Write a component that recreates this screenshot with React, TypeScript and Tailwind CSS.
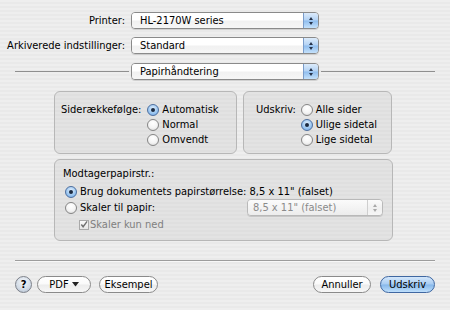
import React from "react";

const FONT = "font-['DejaVu_Sans_Condensed','DejaVu_Sans',sans-serif]";

function Arrows({ disabled = false }: { disabled?: boolean }) {
  const c = disabled ? "#a8a8a8" : "#25324a";
  return (
    <svg width="6" height="10" viewBox="0 0 6 10">
      <path d="M3 1 L5 4 L1 4 Z" fill={c} />
      <path d="M3 9 L5 6 L1 6 Z" fill={c} />
    </svg>
  );
}

function Popup({ text, width, disabled = false }: { text: string; width: string; disabled?: boolean }) {
  return (
    <div
      className={`flex h-[17px] ${width} rounded-[4px] border ${
        disabled ? "border-[#b9b9b9]" : "border-[#8a8a8a]"
      } overflow-hidden shadow-[0_1px_0_rgba(0,0,0,0.12)]`}
    >
      <div
        className={`flex-1 flex items-center leading-none ${
          disabled
            ? "pl-[5px] text-[#8a8a8a] bg-[linear-gradient(180deg,#fbfbfb_0%,#f3f3f3_55%,#ececec_100%)]"
            : "pl-[8px] text-black bg-[linear-gradient(180deg,#ffffff_0%,#ffffff_45%,#f1f1f1_55%,#f6f6f6_100%)]"
        }`}
      >
        {text}
      </div>
      <div
        className={`w-[15px] flex items-center justify-center border-l ${
          disabled
            ? "border-[#cfcfcf] bg-[linear-gradient(180deg,#fbfbfb_0%,#f0f0f0_55%,#f6f6f6_100%)]"
            : "border-[#7a9cca] bg-[linear-gradient(180deg,#dcebfb_0%,#b3d2f4_48%,#8fbdee_52%,#c4e1fb_100%)]"
        }`}
      >
        <Arrows disabled={disabled} />
      </div>
    </div>
  );
}

function Radio({ on = false }: { on?: boolean }) {
  return (
    <span
      className={`shrink-0 w-[12px] h-[12px] rounded-full border flex items-center justify-center ${
        on
          ? "border-[#4d6f9f] bg-[radial-gradient(circle_at_50%_35%,#e3f0fd_0%,#9ec8f1_55%,#6ea6e6_100%)]"
          : "border-[#858585] bg-[radial-gradient(circle_at_50%_30%,#ffffff_0%,#f4f4f4_55%,#d4d4d4_100%)]"
      }`}
    >
      {on && <span className="w-[4px] h-[4px] rounded-full bg-[#1b2a40]" />}
    </span>
  );
}

function RadioRow({ on = false, label }: { on?: boolean; label: string }) {
  return (
    <div className="flex items-center h-[15px] gap-[3px]">
      <Radio on={on} />
      <span className="leading-none">{label}</span>
    </div>
  );
}

function Button({ children, width, primary = false }: { children: React.ReactNode; width: string; primary?: boolean }) {
  return (
    <div
      className={`h-[17px] ${width} rounded-full border flex items-center justify-center leading-none ${
        primary
          ? "border-[#3f67a1] bg-[linear-gradient(180deg,#d4e7fb_0%,#a8ccf2_48%,#86b7ea_52%,#bedffb_100%)]"
          : "border-[#8a8a8a] bg-[linear-gradient(180deg,#ffffff_0%,#fafafa_48%,#ececec_52%,#f7f7f7_100%)]"
      }`}
    >
      {children}
    </div>
  );
}

export default function App() {
  return (
    <div
      className={`w-[450px] h-[310px] overflow-hidden flex flex-col text-[11px] text-black ${FONT} bg-[image:repeating-linear-gradient(180deg,#eeeeee_0px,#eeeeee_2px,#e9e9e9_2px,#e9e9e9_4px)]`}
    >
      {/* Top rows */}
      <div className="mt-[12px] flex items-center h-[17px]">
        <div className="w-[125px] text-right leading-none">Printer:</div>
        <div className="ml-[6px]">
          <Popup text="HL-2170W series" width="w-[188px]" />
        </div>
      </div>
      <div className="mt-[8px] flex items-center h-[17px]">
        <div className="w-[125px] text-right leading-none">Arkiverede indstillinger:</div>
        <div className="ml-[6px]">
          <Popup text="Standard" width="w-[188px]" />
        </div>
      </div>
      <div className="mt-[9px] flex items-center h-[17px] px-[15px]">
        <div className="flex-1 h-px bg-[#8f8f8f]" />
        <div className="mx-[2px]">
          <Popup text="Papirhåndtering" width="w-[188px]" />
        </div>
        <div className="flex-1 h-px bg-[#8f8f8f]" />
      </div>

      {/* Group boxes */}
      <div className="mt-[11px] pl-[54px] flex gap-[6px]">
        <div className="w-[183px] h-[63px] rounded-[6px] border border-[#b7b7b7] bg-[image:repeating-linear-gradient(180deg,#e3e3e3_0px,#e3e3e3_2px,#dfdfdf_2px,#dfdfdf_4px)] pt-[10px] pl-[6px] flex">
          <div className="h-[15px] flex items-center leading-none">Siderækkefølge:</div>
          <div className="ml-[6px] flex flex-col">
            <RadioRow on label="Automatisk" />
            <RadioRow label="Normal" />
            <RadioRow label="Omvendt" />
          </div>
        </div>
        <div className="w-[149px] h-[63px] rounded-[6px] border border-[#b7b7b7] bg-[image:repeating-linear-gradient(180deg,#e3e3e3_0px,#e3e3e3_2px,#dfdfdf_2px,#dfdfdf_4px)] pt-[10px] pl-[12px] flex">
          <div className="h-[15px] flex items-center leading-none">Udskriv:</div>
          <div className="ml-[5px] flex flex-col">
            <RadioRow label="Alle sider" />
            <RadioRow on label="Ulige sidetal" />
            <RadioRow label="Lige sidetal" />
          </div>
        </div>
      </div>

      <div className="mt-[5px] ml-[54px] w-[339px] h-[82px] rounded-[6px] border border-[#b7b7b7] bg-[image:repeating-linear-gradient(180deg,#e3e3e3_0px,#e3e3e3_2px,#dfdfdf_2px,#dfdfdf_4px)] pt-[6px] flex flex-col">
        <div className="pl-[8px] h-[15px] flex items-center leading-none">Modtagerpapirstr.:</div>
        <div className="mt-[3px] pl-[10px]">
          <RadioRow on label={'Brug dokumentets papirstørrelse: 8,5 x 11" (falset)'} />
        </div>
        <div className="pl-[10px] pr-[9px] h-[17px] flex items-center justify-between">
          <div className="flex items-center gap-[3px]">
            <Radio />
            <span className="leading-none">Skaler til papir:</span>
          </div>
          <Popup text={'8,5 x 11" (falset)'} width="w-[136px]" disabled />
        </div>
        <div className="mt-[1px] pl-[24px] h-[15px] flex items-center gap-[1px]">
          <span className="w-[10px] h-[10px] border border-[#a9a9a9] bg-[linear-gradient(180deg,#fafafa,#e6e6e6)] flex items-center justify-center">
            <svg width="9" height="9" viewBox="0 0 9 9">
              <path d="M1.5 4.5 L3.5 7 L8 1" stroke="#707070" strokeWidth="1.6" fill="none" />
            </svg>
          </span>
          <span className="leading-none text-[#7f7f7f]">Skaler kun ned</span>
        </div>
      </div>

      {/* Separator */}
      <div className="mt-[19px] mx-[15px] h-px bg-[#9d9d9d]" />
      <div className="mx-[15px] h-px bg-[#f8f8f8]" />

      {/* Bottom buttons */}
      <div className="mt-[14px] px-[15px] flex items-center h-[17px]">
        <div className="w-[17px] h-[17px] rounded-full border border-[#7c8089] bg-[radial-gradient(circle_at_50%_35%,#f4f7fb_0%,#d2dbe6_60%,#aab6c6_100%)] flex items-center justify-center font-bold text-[11px] leading-none">
          ?
        </div>
        <div className="ml-[5px]">
          <Button width="w-[54px]">
            <span>PDF</span>
            <svg className="ml-[3px]" width="7" height="5" viewBox="0 0 7 5">
              <path d="M0 0 L7 0 L3.5 4.5 Z" fill="#222" />
            </svg>
          </Button>
        </div>
        <div className="ml-[8px]">
          <Button width="w-[59px]">Eksempel</Button>
        </div>
        <div className="flex-1" />
        <Button width="w-[58px]">Annuller</Button>
        <div className="ml-[9px]">
          <Button width="w-[55px]" primary>
            Udskriv
          </Button>
        </div>
      </div>
    </div>
  );
}
